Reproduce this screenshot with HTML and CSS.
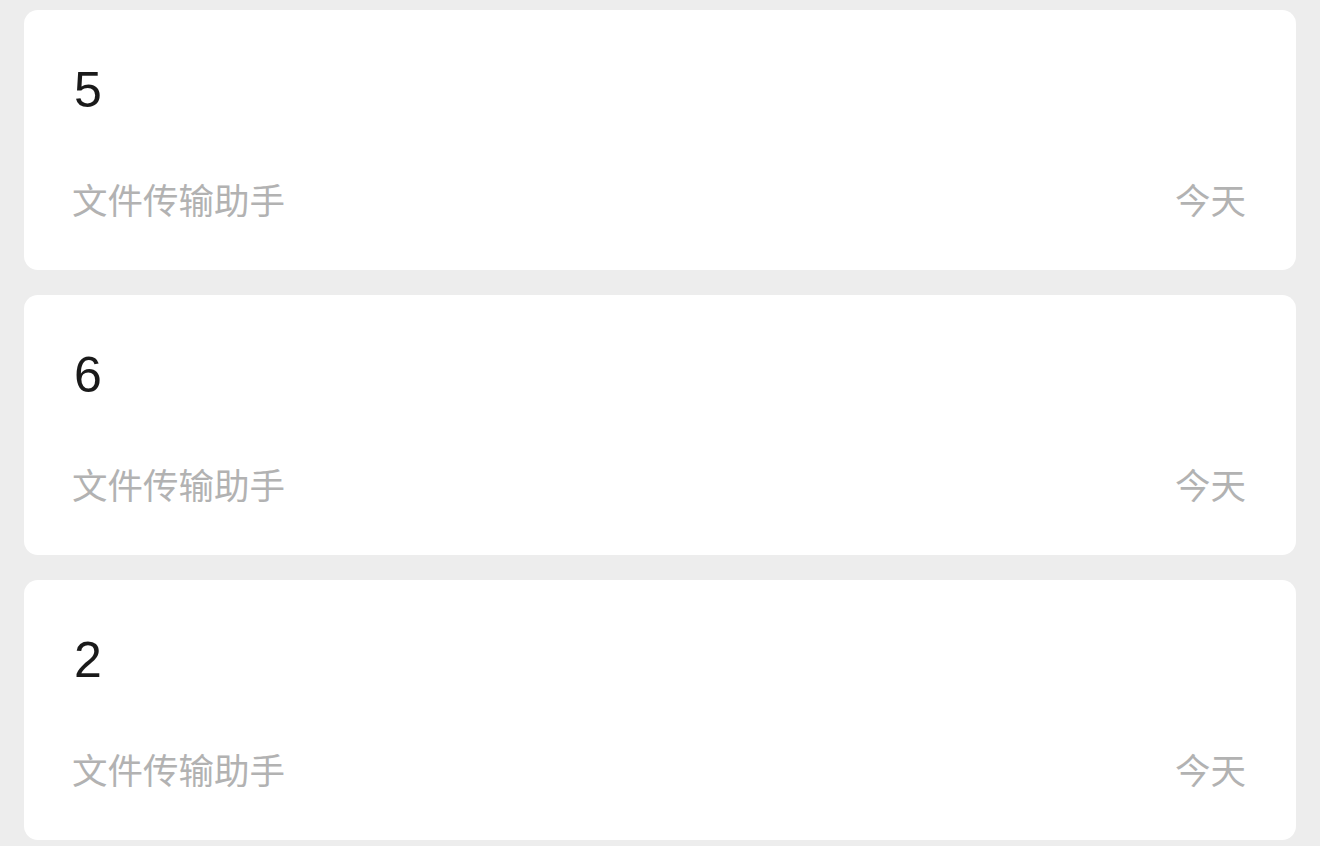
FILE: index.html
```html
<!DOCTYPE html>
<html lang="zh">
<head>
<meta charset="utf-8">
<link rel="stylesheet" href="styles.css">
</head>
<body>
<div class="list">
  <div class="card">
    <div class="num">5</div>
    <div class="meta"><span>文件传输助手</span><span>今天</span></div>
  </div>
  <div class="card">
    <div class="num">6</div>
    <div class="meta"><span>文件传输助手</span><span>今天</span></div>
  </div>
  <div class="card">
    <div class="num">2</div>
    <div class="meta"><span>文件传输助手</span><span>今天</span></div>
  </div>
</div>
</body>
</html>
```
FILE: styles.css
```css
html, body {
  margin: 0;
  padding: 0;
  background: #ededed;
}
body {
  font-family: "Liberation Sans", "Noto Sans CJK SC", sans-serif;
}
.list {
  display: flex;
  flex-direction: column;
  gap: 25px;
  padding: 10px 24px;
}
.card {
  box-sizing: border-box;
  height: 260px;
  background: #ffffff;
  border-radius: 14px;
  padding: 50px 50px 50px 48px;
  display: flex;
  flex-direction: column;
  justify-content: space-between;
}
.num {
  font-size: 50px;
  line-height: 60px;
  color: #1a1a1a;
  margin-left: 2px;
}
.meta {
  display: flex;
  justify-content: space-between;
  font-family: "Noto Sans CJK SC", sans-serif;
  font-size: 35.5px;
  line-height: 43px;
  color: #b2b2b2;
}
```
